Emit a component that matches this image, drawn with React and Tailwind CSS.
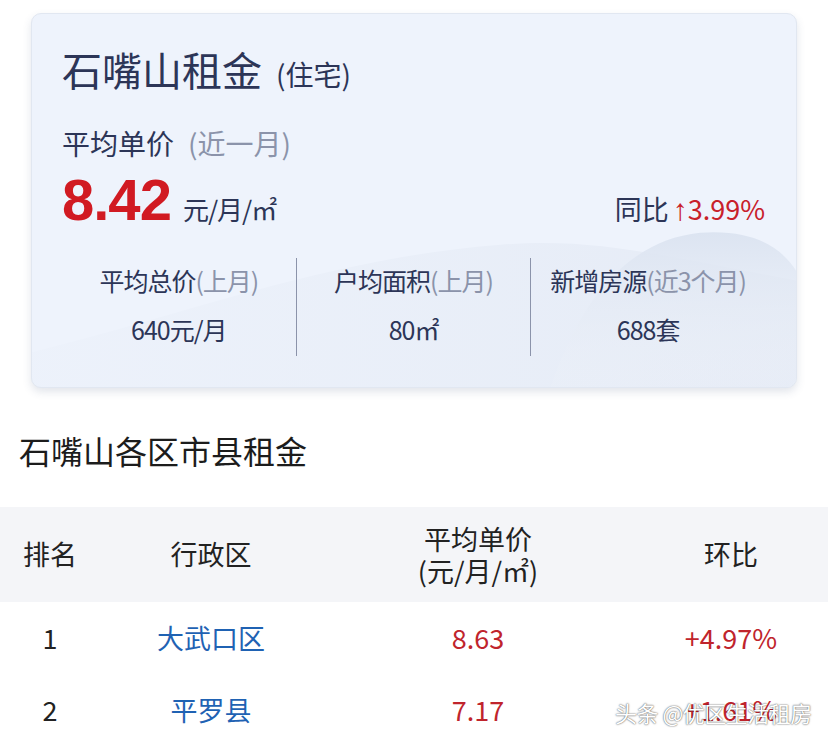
import React from 'react';

const font = { fontFamily: '"Noto Sans CJK SC", "Noto Sans", sans-serif' };

function Stat({ label, note, value }) {
  return (
    <div className="flex-1 flex flex-col items-center pt-[7px]">
      <div className="h-[30px] leading-[30px] text-[25px] text-[#2c3557] whitespace-nowrap tracking-[-1px]">
        {label}
        <span className="text-[#8b93aa]">{note}</span>
      </div>
      <div className="mt-[19px] h-[30px] leading-[30px] text-[25px] text-[#2c3557] tracking-[-1px]">{value}</div>
    </div>
  );
}

function Hills() {
  return (
    <svg className="absolute inset-0 w-full h-full pointer-events-none" viewBox="0 0 766 375" preserveAspectRatio="none">
      <defs>
        <linearGradient id="h1" x1="0" y1="0" x2="0" y2="1">
          <stop offset="0" stopColor="#dce4f1" stopOpacity="1" />
          <stop offset="1" stopColor="#eef2f9" stopOpacity="0.2" />
        </linearGradient>
        <linearGradient id="h2" x1="0" y1="0" x2="1" y2="0">
          <stop offset="0" stopColor="#e6ecf6" stopOpacity="0.2" />
          <stop offset="1" stopColor="#e3e9f4" stopOpacity="0.8" />
        </linearGradient>
      </defs>
      <path d="M0 340 C 160 300, 300 245, 470 232 C 560 225, 620 240, 766 268 L766 375 L0 375 Z" fill="url(#h2)" />
      <path d="M520 375 C 545 300, 590 228, 670 220 C 725 216, 752 236, 766 258 L766 375 Z" fill="url(#h1)" />
    </svg>
  );
}

export default function App() {
  return (
    <div className="w-[828px] h-[744px] bg-white overflow-hidden relative" style={font}>
      <div className="pt-[13px] px-[31px]">
        <div className="relative rounded-[10px] bg-[#eef3fc] border border-[#e1e7f1] shadow-[0_4px_8px_rgba(60,80,120,0.15)] overflow-hidden">
          <Hills />
          <div className="relative pl-[30px] pr-[31px] pt-[35px] pb-[31px]">
            <div className="flex items-baseline h-[40px]">
              <span className="text-[40px] leading-[40px] text-[#2c3557]">石嘴山租金</span>
              <span className="ml-[14px] text-[28px] text-[#2c3557]">(住宅)</span>
            </div>
            <div className="mt-[39px] h-[30px] leading-[30px] text-[28px] text-[#2c3557]">
              平均单价
              <span className="ml-[14px] text-[#8b93aa]">(近一月)</span>
            </div>
            <div className="mt-[14px] h-[56px] flex items-baseline justify-between">
              <div className="flex items-baseline">
                <span className="text-[58px] leading-[56px] font-bold text-[#d11a22] tracking-[-1px]" style={{ fontFamily: '"Liberation Sans", Arial, sans-serif' }}>8.42</span>
                <span className="ml-[12px] text-[26px] text-[#2c3557] tracking-[-1px]">元/月/㎡</span>
              </div>
              <div className="text-[27px] text-[#2c3557]">
                同比<span className="ml-[4px] text-[#c8202a]"><span className="text-[30px]" style={{ fontFamily: '"Liberation Sans", sans-serif' }}>↑</span>3.99%</span>
              </div>
            </div>
            <div className="mt-[30px] h-[98px] flex">
              <Stat label="平均总价" note="(上月)" value="640元/月" />
              <div className="w-px bg-[#8b93aa]" />
              <Stat label="户均面积" note="(上月)" value="80㎡" />
              <div className="w-px bg-[#8b93aa]" />
              <Stat label="新增房源" note="(近3个月)" value="688套" />
            </div>
          </div>
        </div>
      </div>

      <div className="mt-[42px] pl-[19px] h-[40px] leading-[40px] text-[32px] text-[#1c1c1c]">石嘴山各区市县租金</div>

      <div className="mt-[37px]">
        <div className="grid grid-cols-[100px_222px_312px_194px] h-[95px] items-center bg-[#f4f5f8] text-[#222] text-[27px]">
          <div className="text-center">排名</div>
          <div className="text-center">行政区</div>
          <div className="text-center leading-[32px]">
            <div>平均单价</div>
            <div>(元/月/㎡)</div>
          </div>
          <div className="text-center">环比</div>
        </div>
        {[
          ['1', '大武口区', '8.63', '+4.97%'],
          ['2', '平罗县', '7.17', '+1.61%'],
        ].map((r) => (
          <div key={r[0]} className="grid grid-cols-[100px_222px_312px_194px] h-[72px] items-center text-[27px]">
            <div className="text-center text-[#222]">{r[0]}</div>
            <div className="text-center text-[#1f62b3]">{r[1]}</div>
            <div className="text-center text-[#c0242c]">{r[2]}</div>
            <div className="text-center text-[#c0242c]">{r[3]}</div>
          </div>
        ))}
      </div>

      <div className="absolute left-[615px] top-[698px] text-[22px] leading-[28px] text-white tracking-[-0.5px] [text-shadow:0_0_2px_rgba(0,0,0,0.55),0_0_1px_rgba(0,0,0,0.5)]">
        头条 @优区生活租房
      </div>
    </div>
  );
}
